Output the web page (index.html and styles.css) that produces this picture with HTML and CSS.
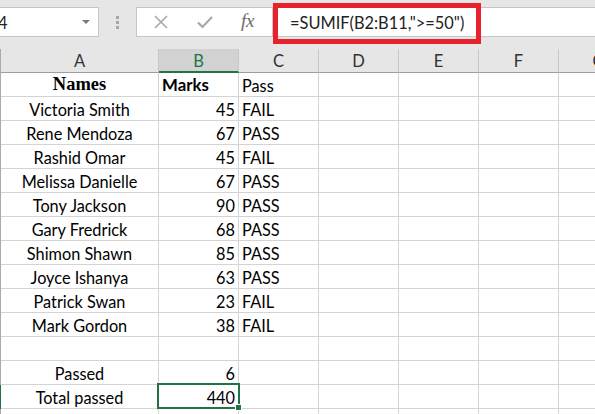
FILE: index.html
```html
<!DOCTYPE html>
<html>
<head>
<meta charset="utf-8">
<link rel="stylesheet" href="styles.css">
</head>
<body>
<div class="app">
  <div class="toolbar">
    <div class="namebox">
      <span class="nb-text">4</span>
      <span class="nb-arrow"></span>
    </div>
    <div class="grip"><i></i><i></i><i></i></div>
    <div class="fbuttons">
      <svg class="ic-x" width="16" height="16" viewBox="0 0 16 16"><path d="M2 2 L14 14 M14 2 L2 14" stroke="#a8a8a8" stroke-width="1.6" fill="none"/></svg>
      <svg class="ic-ok" width="18" height="16" viewBox="0 0 18 16"><path d="M2 8.5 L6.5 13 L16 3" stroke="#a8a8a8" stroke-width="2.2" fill="none"/></svg>
      <span class="fx">fx</span>
    </div>
    <div class="finput">
      <span class="ftext">=SUMIF(B2:B11,"&gt;=50")</span>
      <div class="hl"></div>
    </div>
  </div>
  <div class="sheet">
    <div class="row head">
      <div class="c ca">A</div><div class="c cb hsel">B</div><div class="c cc">C</div><div class="c cd">D</div><div class="c ce">E</div><div class="c cf">F</div><div class="c cg">G</div>
    </div>
    <div class="row"><div class="c ca names">Names</div><div class="c cb marks">Marks</div><div class="c cc l">Pass</div><div class="c cd"></div><div class="c ce"></div><div class="c cf"></div><div class="c cg"></div></div>
    <div class="row"><div class="c ca">Victoria Smith</div><div class="c cb r">45</div><div class="c cc l">FAIL</div><div class="c cd"></div><div class="c ce"></div><div class="c cf"></div><div class="c cg"></div></div>
    <div class="row"><div class="c ca">Rene Mendoza</div><div class="c cb r">67</div><div class="c cc l">PASS</div><div class="c cd"></div><div class="c ce"></div><div class="c cf"></div><div class="c cg"></div></div>
    <div class="row"><div class="c ca">Rashid Omar</div><div class="c cb r">45</div><div class="c cc l">FAIL</div><div class="c cd"></div><div class="c ce"></div><div class="c cf"></div><div class="c cg"></div></div>
    <div class="row"><div class="c ca">Melissa Danielle</div><div class="c cb r">67</div><div class="c cc l">PASS</div><div class="c cd"></div><div class="c ce"></div><div class="c cf"></div><div class="c cg"></div></div>
    <div class="row"><div class="c ca">Tony Jackson</div><div class="c cb r">90</div><div class="c cc l">PASS</div><div class="c cd"></div><div class="c ce"></div><div class="c cf"></div><div class="c cg"></div></div>
    <div class="row"><div class="c ca">Gary Fredrick</div><div class="c cb r">68</div><div class="c cc l">PASS</div><div class="c cd"></div><div class="c ce"></div><div class="c cf"></div><div class="c cg"></div></div>
    <div class="row"><div class="c ca">Shimon Shawn</div><div class="c cb r">85</div><div class="c cc l">PASS</div><div class="c cd"></div><div class="c ce"></div><div class="c cf"></div><div class="c cg"></div></div>
    <div class="row"><div class="c ca">Joyce Ishanya</div><div class="c cb r">63</div><div class="c cc l">PASS</div><div class="c cd"></div><div class="c ce"></div><div class="c cf"></div><div class="c cg"></div></div>
    <div class="row"><div class="c ca">Patrick Swan</div><div class="c cb r">23</div><div class="c cc l">FAIL</div><div class="c cd"></div><div class="c ce"></div><div class="c cf"></div><div class="c cg"></div></div>
    <div class="row"><div class="c ca">Mark Gordon</div><div class="c cb r">38</div><div class="c cc l">FAIL</div><div class="c cd"></div><div class="c ce"></div><div class="c cf"></div><div class="c cg"></div></div>
    <div class="row"><div class="c ca"></div><div class="c cb"></div><div class="c cc"></div><div class="c cd"></div><div class="c ce"></div><div class="c cf"></div><div class="c cg"></div></div>
    <div class="row"><div class="c ca">Passed</div><div class="c cb r">6</div><div class="c cc"></div><div class="c cd"></div><div class="c ce"></div><div class="c cf"></div><div class="c cg"></div></div>
    <div class="row rsel"><div class="c ca">Total passed</div><div class="c cb r csel">440</div><div class="c cc"></div><div class="c cd"></div><div class="c ce"></div><div class="c cf"></div><div class="c cg"></div></div>
    <div class="row"><div class="c ca"></div><div class="c cb"></div><div class="c cc"></div><div class="c cd"></div><div class="c ce"></div><div class="c cf"></div><div class="c cg"></div></div>
  </div>
</div>
</body>
</html>
```

FILE: styles.css
```css
* { box-sizing: border-box; }
html, body { margin: 0; padding: 0; }
body {
  width: 595px;
  height: 414px;
  overflow: hidden;
  background: #ffffff;
  font-family: "Lato", "Open Sans", sans-serif;
  color: #000;
}
.app { width: 595px; height: 414px; overflow: hidden; }

.toolbar {
  height: 49px;
  background: #e6e6e6;
  display: flex;
  align-items: flex-start;
  padding-top: 7px;
  position: relative;
}
.namebox {
  width: 99px;
  height: 30px;
  background: #fff;
  border: 1px solid #c6c6c6;
  border-left: none;
  display: flex;
  align-items: center;
  justify-content: space-between;
  padding: 0 8px 0 0;
}
.nb-text { font-size: 16.4px; margin-left: -2px; color: #222; }
.nb-arrow {
  width: 0; height: 0;
  border-left: 4px solid transparent;
  border-right: 4px solid transparent;
  border-top: 4px solid #7a7a7a;
}
.grip {
  width: 37px;
  height: 30px;
  display: flex;
  flex-direction: column;
  align-items: center;
  justify-content: center;
  gap: 2px;
}
.grip i { display: block; width: 3px; height: 3px; background: #a6a6a6; }
.fbuttons {
  width: 137px;
  height: 30px;
  background: #fff;
  border: 1px solid #c6c6c6;
  display: flex;
  align-items: center;
  padding-left: 16px;
}
.ic-x { margin-right: 27px; }
.ic-ok { margin-right: 27px; }
.fx {
  font-family: "Liberation Serif", serif;
  font-style: italic;
  font-size: 19px;
  color: #6a6a6a;
  margin-top: -2px;
  letter-spacing: -0.3px;
}
.finput {
  flex: 1;
  height: 30px;
  background: #fff;
  border-top: 1px solid #c6c6c6;
  border-bottom: 1px solid #c6c6c6;
  display: flex;
  align-items: center;
  padding-left: 17px;
  position: relative;
}
.ftext { font-size: 16.4px; color: #222; }
.hl {
  position: absolute;
  left: 0;
  top: -5px;
  width: 208px;
  height: 41px;
  border: 5px solid #e8212c;
}

.sheet { border-left: 1px solid #ababab; }
.row { display: flex; height: 24px; }
.c {
  height: 24px;
  border-right: 1px solid #d4d4d4;
  border-bottom: 1px solid #d4d4d4;
  font-size: 16.3px;
  display: flex;
  align-items: flex-end;
  justify-content: center;
  padding-bottom: 1px;
  white-space: nowrap;
  flex: none;
}
.ca { width: 158px; }
.cb, .cc, .cd, .ce, .cf { width: 80px; }
.cg { width: 80px; }
.r { justify-content: flex-end; padding-right: 3px; }
.l { justify-content: flex-start; padding-left: 3px; }

.head .c {
  height: 24px;
  background: #e6e6e6;
  border-right: 1px solid #c8c8c8;
  border-bottom: 1px solid #9e9e9e;
  align-items: center;
  padding-bottom: 0;
  color: #333;
  font-size: 16.5px;
}
.head .hsel {
  background: #d2d2d2;
  color: #217346;
  border-bottom: 2px solid #217346;
  padding-top: 1px;
}
.names {
  font-family: "Liberation Serif", serif;
  font-weight: bold;
  font-size: 18.5px;
  padding-bottom: 1px;
}
.marks { justify-content: flex-start; padding-left: 3px; font-weight: bold; font-size: 16.8px; }

.rsel .ca { box-shadow: -1px 0 0 #217346; }
.csel { position: relative; }
.csel::after {
  content: "";
  position: absolute;
  left: -2px;
  top: -2px;
  right: -2px;
  bottom: -1px;
  border: 2px solid #217346;
}
.csel::before {
  content: "";
  position: absolute;
  right: -4px;
  bottom: -3px;
  width: 5px;
  height: 5px;
  background: #217346;
  border: 1px solid #fff;
  z-index: 2;
}
```
